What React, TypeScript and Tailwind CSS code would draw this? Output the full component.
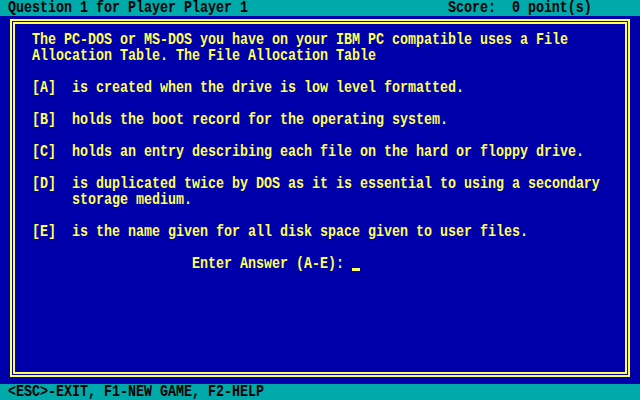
const topLine = " Question 1 for Player Player 1" + " ".repeat(25) + "Score:  0 point(s)";
const bottomLine = " <ESC>-EXIT, F1-NEW GAME, F2-HELP";

const rows = [
  "The PC-DOS or MS-DOS you have on your IBM PC compatible uses a File",
  "Allocation Table. The File Allocation Table",
  "",
  "[A]  is created when the drive is low level formatted.",
  "",
  "[B]  holds the boot record for the operating system.",
  "",
  "[C]  holds an entry describing each file on the hard or floppy drive.",
  "",
  "[D]  is duplicated twice by DOS as it is essential to using a secondary",
  "     storage medium.",
  "",
  "[E]  is the name given for all disk space given to user files.",
  "",
];

const mono = "font-['Liberation_Mono','DejaVu_Sans_Mono',monospace] font-bold text-[13.333px] leading-[16px] whitespace-pre";
// VGA glyphs are taller than Liberation Mono at an 8px advance
const tall = "h-4 scale-y-[1.18]";

export default function App() {
  return (
    <div className={`w-[640px] h-[400px] flex flex-col bg-[#0000aa] ${mono}`}>
      {/* status bar */}
      <div className="h-4 bg-[#00aaaa] text-black">
        <div className={tall}>{topLine}</div>
      </div>

      {/* question window */}
      <div className="h-[368px] bg-[#0000aa] pt-[3px] px-[10px]">
        <div className="h-[358px] border-2 border-[#ffff55] p-px">
          <div className="h-full border-2 border-[#ffff55] pl-[17px] pt-2 text-[#ffff55]">
            {rows.map((r, i) => (
              <div key={i} className={tall}>{r}</div>
            ))}
            <div className="h-4">
              <span className="inline-block scale-y-[1.18]">{"                    Enter Answer (A-E): "}</span>
              <span className="inline-block w-2 h-4 align-top relative">
                <span className="absolute left-0 right-0 top-[12px] h-[3px] bg-[#ffff55]" />
              </span>
            </div>
          </div>
        </div>
      </div>

      {/* key help */}
      <div className="h-4 bg-[#00aaaa] text-black">
        <div className={tall}>{bottomLine}</div>
      </div>
    </div>
  );
}
